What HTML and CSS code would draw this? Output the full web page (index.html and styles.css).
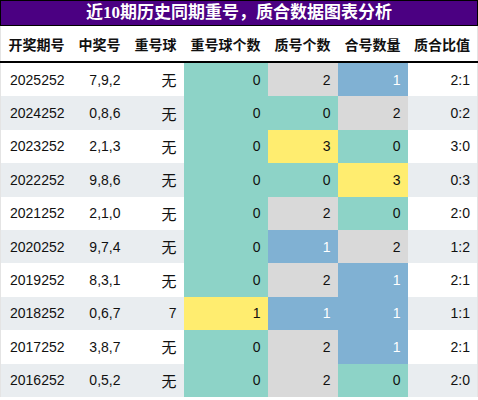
FILE: index.html
```html
<!DOCTYPE html>
<html lang="zh-CN">
<head>
    <meta charset="UTF-8">
    <meta name="viewport" content="width=device-width, initial-scale=1.0">
    <title>近10期历史同期重号</title>
    <link rel="stylesheet" href="styles.css">
</head>
<body>
    <div class="chart-title">近10期历史同期重号，质合数据图表分析</div>

    <table class="data-table">
        <colgroup>
            <col class="c-issue">
            <col class="c-nums">
            <col class="c-repeat">
            <col class="c-count">
            <col class="c-val">
            <col class="c-val">
            <col class="c-val">
        </colgroup>
        <thead>
            <tr>
                <th>开奖期号</th>
                <th>中奖号</th>
                <th>重号球</th>
                <th>重号球个数</th>
                <th>质号个数</th>
                <th>合号数量</th>
                <th>质合比值</th>
            </tr>
        </thead>
        <tbody>
            <tr>
                <td>2025252</td><td>7,9,2</td><td class="cjk">无</td>
                <td class="v0">0</td><td class="v2">2</td><td class="v1">1</td><td>2:1</td>
            </tr>
            <tr>
                <td>2024252</td><td>0,8,6</td><td class="cjk">无</td>
                <td class="v0">0</td><td class="v0">0</td><td class="v2">2</td><td>0:2</td>
            </tr>
            <tr>
                <td>2023252</td><td>2,1,3</td><td class="cjk">无</td>
                <td class="v0">0</td><td class="v3">3</td><td class="v0">0</td><td>3:0</td>
            </tr>
            <tr>
                <td>2022252</td><td>9,8,6</td><td class="cjk">无</td>
                <td class="v0">0</td><td class="v0">0</td><td class="v3">3</td><td>0:3</td>
            </tr>
            <tr>
                <td>2021252</td><td>2,1,0</td><td class="cjk">无</td>
                <td class="v0">0</td><td class="v2">2</td><td class="v0">0</td><td>2:0</td>
            </tr>
            <tr>
                <td>2020252</td><td>9,7,4</td><td class="cjk">无</td>
                <td class="v0">0</td><td class="v1">1</td><td class="v2">2</td><td>1:2</td>
            </tr>
            <tr>
                <td>2019252</td><td>8,3,1</td><td class="cjk">无</td>
                <td class="v0">0</td><td class="v2">2</td><td class="v1">1</td><td>2:1</td>
            </tr>
            <tr>
                <td>2018252</td><td>0,6,7</td><td>7</td>
                <td class="v3">1</td><td class="v1">1</td><td class="v1">1</td><td>1:1</td>
            </tr>
            <tr>
                <td>2017252</td><td>3,8,7</td><td class="cjk">无</td>
                <td class="v0">0</td><td class="v2">2</td><td class="v1">1</td><td>2:1</td>
            </tr>
            <tr>
                <td>2016252</td><td>0,5,2</td><td class="cjk">无</td>
                <td class="v0">0</td><td class="v2">2</td><td class="v0">0</td><td>2:0</td>
            </tr>
        </tbody>
    </table>
</body>
</html>
```

FILE: styles.css
```css
/* Page */
body {
    margin: 0;
    padding: 0;
    width: 478px;
    background: #ffffff;
    font-family: "Liberation Sans", "Noto Sans CJK SC", sans-serif;
    color: #111111;
}

/* Title bar */
.chart-title {
    height: 24px;
    line-height: 24px;
    background-color: #4b0082;
    border: 1px solid #000000;
    color: #ffffff;
    font-family: "Liberation Serif", "Noto Sans CJK SC", serif;
    font-size: 17px;
    font-weight: bold;
    text-align: center;
    letter-spacing: 0;
}

/* Table */
.data-table {
    width: 478px;
    border-collapse: collapse;
    table-layout: fixed;
    font-size: 14px;
    border-left: 1px solid #e4e4e4;
    border-right: 1px solid #e4e4e4;
}

.c-issue { width: 71px; }
.c-nums { width: 56px; }
.c-repeat { width: 56px; }
.c-count { width: 84px; }
.c-val { width: 70px; }

.data-table th {
    height: 35px;
    padding: 0 7px 0 0;
    text-align: right;
    font-family: "Noto Sans CJK SC", sans-serif;
    font-size: 14px;
    font-weight: bold;
    color: #111111;
    border-bottom: 2px solid #000000;
    white-space: nowrap;
}

.data-table td {
    height: 33.4px;
    padding: 0 7px 0 0;
    text-align: right;
    white-space: nowrap;
}

.data-table td.cjk {
    font-family: "Noto Sans CJK SC", sans-serif;
    font-size: 15px;
}

.data-table tbody tr:nth-child(even) td {
    background-color: #e9edf0;
}

/* Value colours */
.data-table tbody tr td.v0 { background-color: #8dd3c7; }
.data-table tbody tr td.v1 { background-color: #80b1d3; color: #ffffff; }
.data-table tbody tr td.v2 { background-color: #d9d9d9; }
.data-table tbody tr td.v3 { background-color: #ffed6f; }
```
